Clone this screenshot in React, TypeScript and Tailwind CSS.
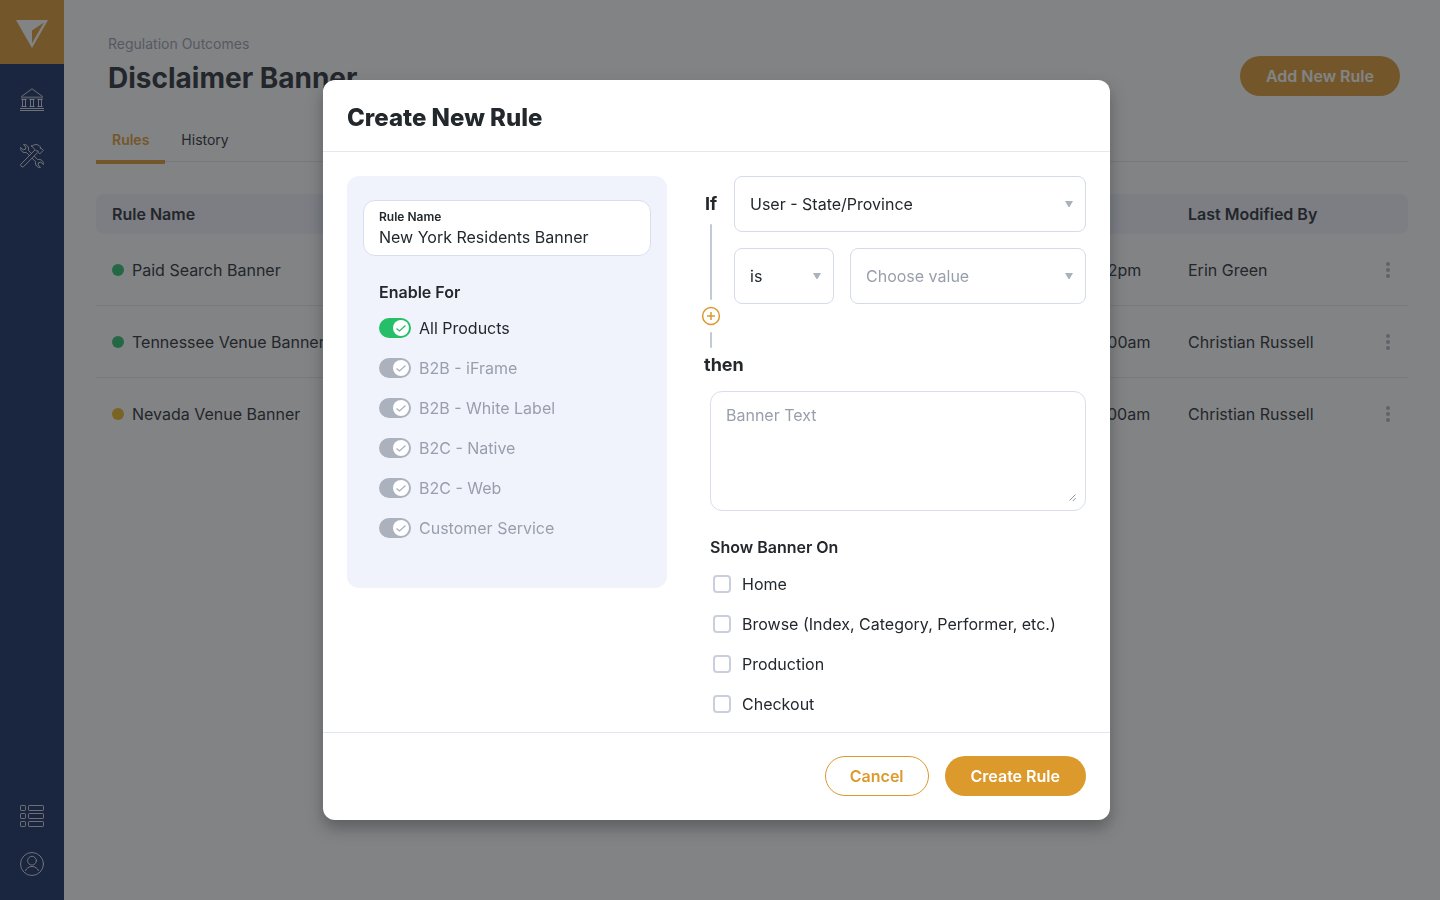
import { useState } from 'react';
import type { ReactNode } from 'react';

const rules = [
  { name: 'Paid Search Banner', dot: 'bg-[#27be69]', modified: '04/12/2021 4:32pm', by: 'Erin Green' },
  { name: 'Tennessee Venue Banner', dot: 'bg-[#27be69]', modified: '03/30/2021 10:00am', by: 'Christian Russell' },
  { name: 'Nevada Venue Banner', dot: 'bg-[#eab71e]', modified: '03/28/2021 10:00am', by: 'Christian Russell' },
];

const products = ['B2B - iFrame', 'B2B - White Label', 'B2C - Native', 'B2C - Web', 'Customer Service'];

const pages = ['Home', 'Browse (Index, Category, Performer, etc.)', 'Production', 'Checkout'];

const Logo = () => (
  <svg viewBox="0 0 32 28" className="h-7 w-8" aria-hidden="true">
    <path fill="#fff" fillRule="evenodd" d="M0 0h32L16 28ZM28 2.600 16 10.400v12.800Z" />
  </svg>
);

const BankIcon = () => (
  <svg viewBox="0 0 24 24" className="size-6" fill="none" stroke="currentColor" aria-hidden="true">
    <path d="M1.500 8.500 12 .8l10.500 7.700" strokeLinejoin="round" />
    <path d="M1 9.500h22" strokeWidth="2" opacity=".6" />
    <path d="M2.500 11v7.500M5.500 11v7.500M10.500 11v7.500M13.500 11v7.500M18.500 11v7.500M21.500 11v7.500" />
    <path d="M1.500 11.500h5M9.500 11.500h5M17.500 11.500h5M1.500 18.500h5M9.500 18.500h5M17.500 18.500h5" />
    <path d="M0 20.500h24M0 22.500h24" />
  </svg>
);

const ToolsIcon = () => (
  <svg viewBox="0 0 24 24" className="size-6" fill="none" stroke="currentColor" strokeLinejoin="round" strokeLinecap="round" aria-hidden="true">
    {/* wrench */}
    <path d="M9.700 11.800 6.300 8.400C3.200 9.300.2 6.900.6 3.500l2.600 2.300 2.200-.5.500-2.200L3.500.6C6.900.1 9.300 3.100 8.400 6.300l3.200 3.300" />
    <path d="m14.300 12.200 3.400 3.400c3.100-.9 6.100 1.500 5.700 4.900l-2.600-2.300-2.200.5-.5 2.200 2.400 2.500c-3.400.5-5.800-2.500-4.900-5.700l-3.300-3.300" />
    {/* hammer */}
    <path d="M14.600 6.300.9 20.200c-1 1.300.9 3.500 2.600 2.500L17.300 8.900" />
    <path d="M12.300 1.900c2-1.800 5.200-1.900 7.100 0l1 1-.1 1.700 1.500.1 1.600 1.600-3.700 3.700-1.600-1.600V6.900l-1.700.1-2.300-2.300c-.6-1.300-1.700-1.900-2.800-2.800Z" />
  </svg>
);

const ListIcon = () => (
  <svg viewBox="0 0 24 24" className="size-6" fill="none" stroke="currentColor" aria-hidden="true">
    {[1.5, 9.5, 17.5].map((y) => (
      <g key={y}>
        <rect x=".5" y={y} width="5" height="5" rx=".8" />
        <rect x="8.500" y={y} width="15" height="5" rx=".8" />
      </g>
    ))}
  </svg>
);

const UserIcon = () => (
  <svg viewBox="0 0 24 24" className="size-6" fill="none" stroke="currentColor" strokeLinecap="round" aria-hidden="true">
    <circle cx="12" cy="12" r="11.500" />
    <circle cx="12" cy="8.700" r="4.400" />
    <path d="M5.500 18.600c.9-2.400 3.500-4.100 6.500-4.100s5.600 1.700 6.500 4.100" />
  </svg>
);

const NavLink = ({ label, children }: { label: string; children: ReactNode }) => (
  <a href="#" aria-label={label} className="text-white/80">
    {children}
  </a>
);

const Sidebar = () => (
  <nav className="flex w-16 shrink-0 flex-col items-center bg-[#10285d]">
    <a href="#" aria-label="Dashboard" className="flex h-16 w-full items-center justify-center bg-[#dc9a2d] pt-1">
      <Logo />
    </a>
    <div className="flex flex-col gap-8 pt-6">
      <NavLink label="Regulation"><BankIcon /></NavLink>
      <NavLink label="Tools"><ToolsIcon /></NavLink>
    </div>
    <div className="mt-auto flex flex-col gap-6 pb-6">
      <NavLink label="Lists"><ListIcon /></NavLink>
      <NavLink label="Account"><UserIcon /></NavLink>
    </div>
  </nav>
);

const RulesTable = () => (
  <table className="mt-8 w-full table-fixed border-separate border-spacing-0 text-left whitespace-nowrap">
    <thead>
      <tr className="h-10">
        <th className="rounded-l-lg bg-[#f0f3fc] px-4 font-semibold">Rule Name</th>
        <th className="w-[194px] bg-[#f0f3fc] px-4 font-semibold">Modified</th>
        <th className="w-[196px] bg-[#f0f3fc] px-4 font-semibold">Last Modified By</th>
        <th className="w-10 rounded-r-lg bg-[#f0f3fc]" aria-label="Actions" />
      </tr>
    </thead>
    <tbody>
      {rules.map((rule) => (
        <tr key={rule.name} className="group h-[72px]">
          <td className="border-b border-[#e3e8ef] px-4 group-last:border-0">
            <span className="flex items-center gap-2">
              <span className={`size-3 rounded-full ${rule.dot}`} />
              {rule.name}
            </span>
          </td>
          <td className="border-b border-[#e3e8ef] px-4 group-last:border-0">{rule.modified}</td>
          <td className="border-b border-[#e3e8ef] px-4 group-last:border-0">{rule.by}</td>
          <td className="border-b border-[#e3e8ef] group-last:border-0">
            <button type="button" aria-label={`Options for ${rule.name}`} className="flex w-10 justify-center text-[#aeb4bf]">
              <svg viewBox="0 0 16 16" className="size-4" fill="currentColor" aria-hidden="true">
                <circle cx="8" cy="2" r="2" />
                <circle cx="8" cy="8" r="2" />
                <circle cx="8" cy="14" r="2" />
              </svg>
            </button>
          </td>
        </tr>
      ))}
    </tbody>
  </table>
);

const Toggle = ({ label, checked, disabled, onChange }: { label: string; checked: boolean; disabled?: boolean; onChange?: () => void }) => (
  <label className={`flex h-6 items-center gap-2 ${disabled ? 'text-[#989fab]' : ''}`}>
    <span className="grid h-5 w-8 items-center">
      <input
        type="checkbox"
        role="switch"
        checked={checked}
        disabled={disabled}
        onChange={onChange}
        className="peer col-start-1 row-start-1 h-5 w-8 appearance-none rounded-full bg-[#abb2bd] checked:enabled:bg-[#27be69]"
      />
      <svg
        viewBox="0 0 16 16"
        className="pointer-events-none col-start-1 row-start-1 mx-0.5 size-4 justify-self-start text-[#abb2bd] peer-checked:justify-self-end peer-checked:peer-enabled:text-[#27be69]"
        fill="none"
        aria-hidden="true"
      >
        <circle cx="8" cy="8" r="8" fill="#fff" />
        <path d="m3.500 8.500 3 2.500 6-5.500" stroke="currentColor" strokeWidth="1.300" />
      </svg>
    </span>
    {label}
  </label>
);

const Select = ({ label, options, className, muted }: { label: string; options: string[]; className: string; muted?: boolean }) => (
  <div className={`relative ${className}`}>
    <select
      aria-label={label}
      className={`h-14 w-full appearance-none rounded-lg border border-[#d5dbe7] bg-white pr-8 pl-[15px] ${muted ? 'text-[#989fab]' : ''}`}
    >
      {options.map((option) => (
        <option key={option}>{option}</option>
      ))}
    </select>
    <svg viewBox="0 0 8 6" className="pointer-events-none absolute top-[25px] right-[13px] h-1.5 w-2" aria-hidden="true">
      <path d="M0 0h8L4.800 5.500q-.8 1-1.600 0Z" fill="#abb2bd" />
    </svg>
  </div>
);

const CreateRuleModal = () => {
  const [allProducts, setAllProducts] = useState(true);

  return (
    <div className="fixed inset-0 flex items-start justify-center overflow-auto bg-[rgba(35,37,40,0.57)] py-20 pr-[7px]">
      <form
        role="dialog"
        aria-labelledby="modal-title"
        onSubmit={(e) => e.preventDefault()}
        className="w-full max-w-[787px] rounded-xl bg-white shadow-[0_8px_16px_rgba(35,37,40,0.4)]"
      >
        <header className="border-b border-[#e5e9ee] px-6 pt-6 pb-[19px]">
          <h2 id="modal-title" className="text-2xl leading-7 font-extrabold">Create New Rule</h2>
        </header>

        <div className="flex items-start gap-8 px-6 pt-6 pb-4">
          <section className="w-80 shrink-0 rounded-xl bg-[#f0f3fc] px-4 pt-6 pb-12">
            <div className="flex h-14 flex-col rounded-xl border border-[#d9deee] bg-white px-[15px] pt-2">
              <label htmlFor="rule-name" className="text-xs leading-4 font-semibold">Rule Name</label>
              <input id="rule-name" defaultValue="New York Residents Banner" className="h-6 w-full outline-none" />
            </div>
            <fieldset className="mt-6 px-4">
              <legend className="font-semibold">Enable For</legend>
              <div className="flex flex-col gap-4 pt-3">
                <Toggle label="All Products" checked={allProducts} onChange={() => setAllProducts(!allProducts)} />
                {products.map((product) => (
                  <Toggle key={product} label={product} checked disabled />
                ))}
              </div>
            </fieldset>
          </section>

          <section className="flex-1">
            <div className="flex gap-[11px]">
              {/* condition rail */}
              <div className="flex w-6 flex-col items-center pt-4">
                <span className="text-lg leading-6 font-bold">If</span>
                <span className="mt-2 h-[76px] w-0.5 rounded-full bg-[#c3c9d9]" />
                <button type="button" aria-label="Add condition" className="my-1.5 text-[#dc9a2d]">
                  <svg viewBox="0 0 20 20" className="size-5" fill="none" stroke="currentColor" strokeWidth="1.500" aria-hidden="true">
                    <circle cx="10" cy="10" r="8.400" />
                    <path d="M10 6v8M6 10h8" />
                  </svg>
                </button>
                <span className="h-4 w-0.5 rounded-full bg-[#c3c9d9]" />
              </div>
              <div className="flex flex-1 flex-col gap-4">
                <Select label="Condition field" options={['User - State/Province', 'User - Country']} className="w-full" />
                <div className="flex gap-4">
                  <Select label="Operator" options={['is', 'is not']} className="w-[100px]" />
                  <Select label="Value" options={['Choose value', 'New York', 'Tennessee', 'Nevada']} className="flex-1" muted />
                </div>
              </div>
            </div>

            <p className="mt-[5px] pl-[5px] text-lg leading-6 font-bold">then</p>

            <div className="mt-3.5 pl-[11px]">
              <div className="relative">
                <textarea
                  aria-label="Banner Text"
                  placeholder="Banner Text"
                  className="block h-[120px] w-full resize-none rounded-xl border border-[#d9deea] px-[15px] py-[11px] placeholder:text-[#989fab]"
                />
                <svg viewBox="0 0 8 8" className="pointer-events-none absolute right-[9px] bottom-[9px] size-2" stroke="#8f959f" aria-hidden="true">
                  <path d="M.5 6.500l6-6M3.800 7l3-3" />
                </svg>
              </div>
              <fieldset className="mt-6">
                <legend className="font-semibold">Show Banner On</legend>
                <div className="flex flex-col gap-4 pt-[13px]">
                  {pages.map((page) => (
                    <label key={page} className="flex h-6 items-center gap-[11px] pl-[3px] whitespace-nowrap">
                      <input type="checkbox" className="size-[18px] appearance-none rounded border-2 border-[#c9cfdc] checked:bg-[#dc9a2d]" />
                      {page}
                    </label>
                  ))}
                </div>
              </fieldset>
            </div>
          </section>
        </div>

        <footer className="flex justify-end gap-4 border-t border-[#e1e7ef] px-6 pt-[23px] pb-6 font-semibold">
          <button type="button" className="h-10 rounded-full border border-[#dc9a2d] px-6 text-[#dc9a2d]">Cancel</button>
          <button type="submit" className="h-10 rounded-full bg-[#dc9a2d] px-[26px] text-white">Create Rule</button>
        </footer>
      </form>
    </div>
  );
};

export default function App() {
  return (
    <div className="flex min-h-screen bg-white font-['Inter',sans-serif] text-base text-[#23282d]">
      <Sidebar />
      <main className="flex-1 px-8 pt-8">
        <div className="flex items-center justify-between pr-2 pl-3">
          <div>
            <p className="text-sm leading-6 text-[#989fab]">Regulation Outcomes</p>
            <h1 className="text-[28px] leading-11 font-bold">Disclaimer Banner</h1>
          </div>
          <button type="button" className="mt-5 h-10 rounded-full bg-[#dc9a2d] px-[26px] font-semibold text-white">Add New Rule</button>
        </div>
        <div className="mt-4 flex h-[46px] border-b border-[#e1e7ef] text-sm">
          <a href="#" className="h-12 border-b-4 border-[#dc9a2d] px-4 pt-3.5 font-semibold text-[#dc9a2d]">Rules</a>
          <a href="#" className="h-12 px-4 pt-3.5">History</a>
        </div>
        <RulesTable />
      </main>
      <CreateRuleModal />
    </div>
  );
}
